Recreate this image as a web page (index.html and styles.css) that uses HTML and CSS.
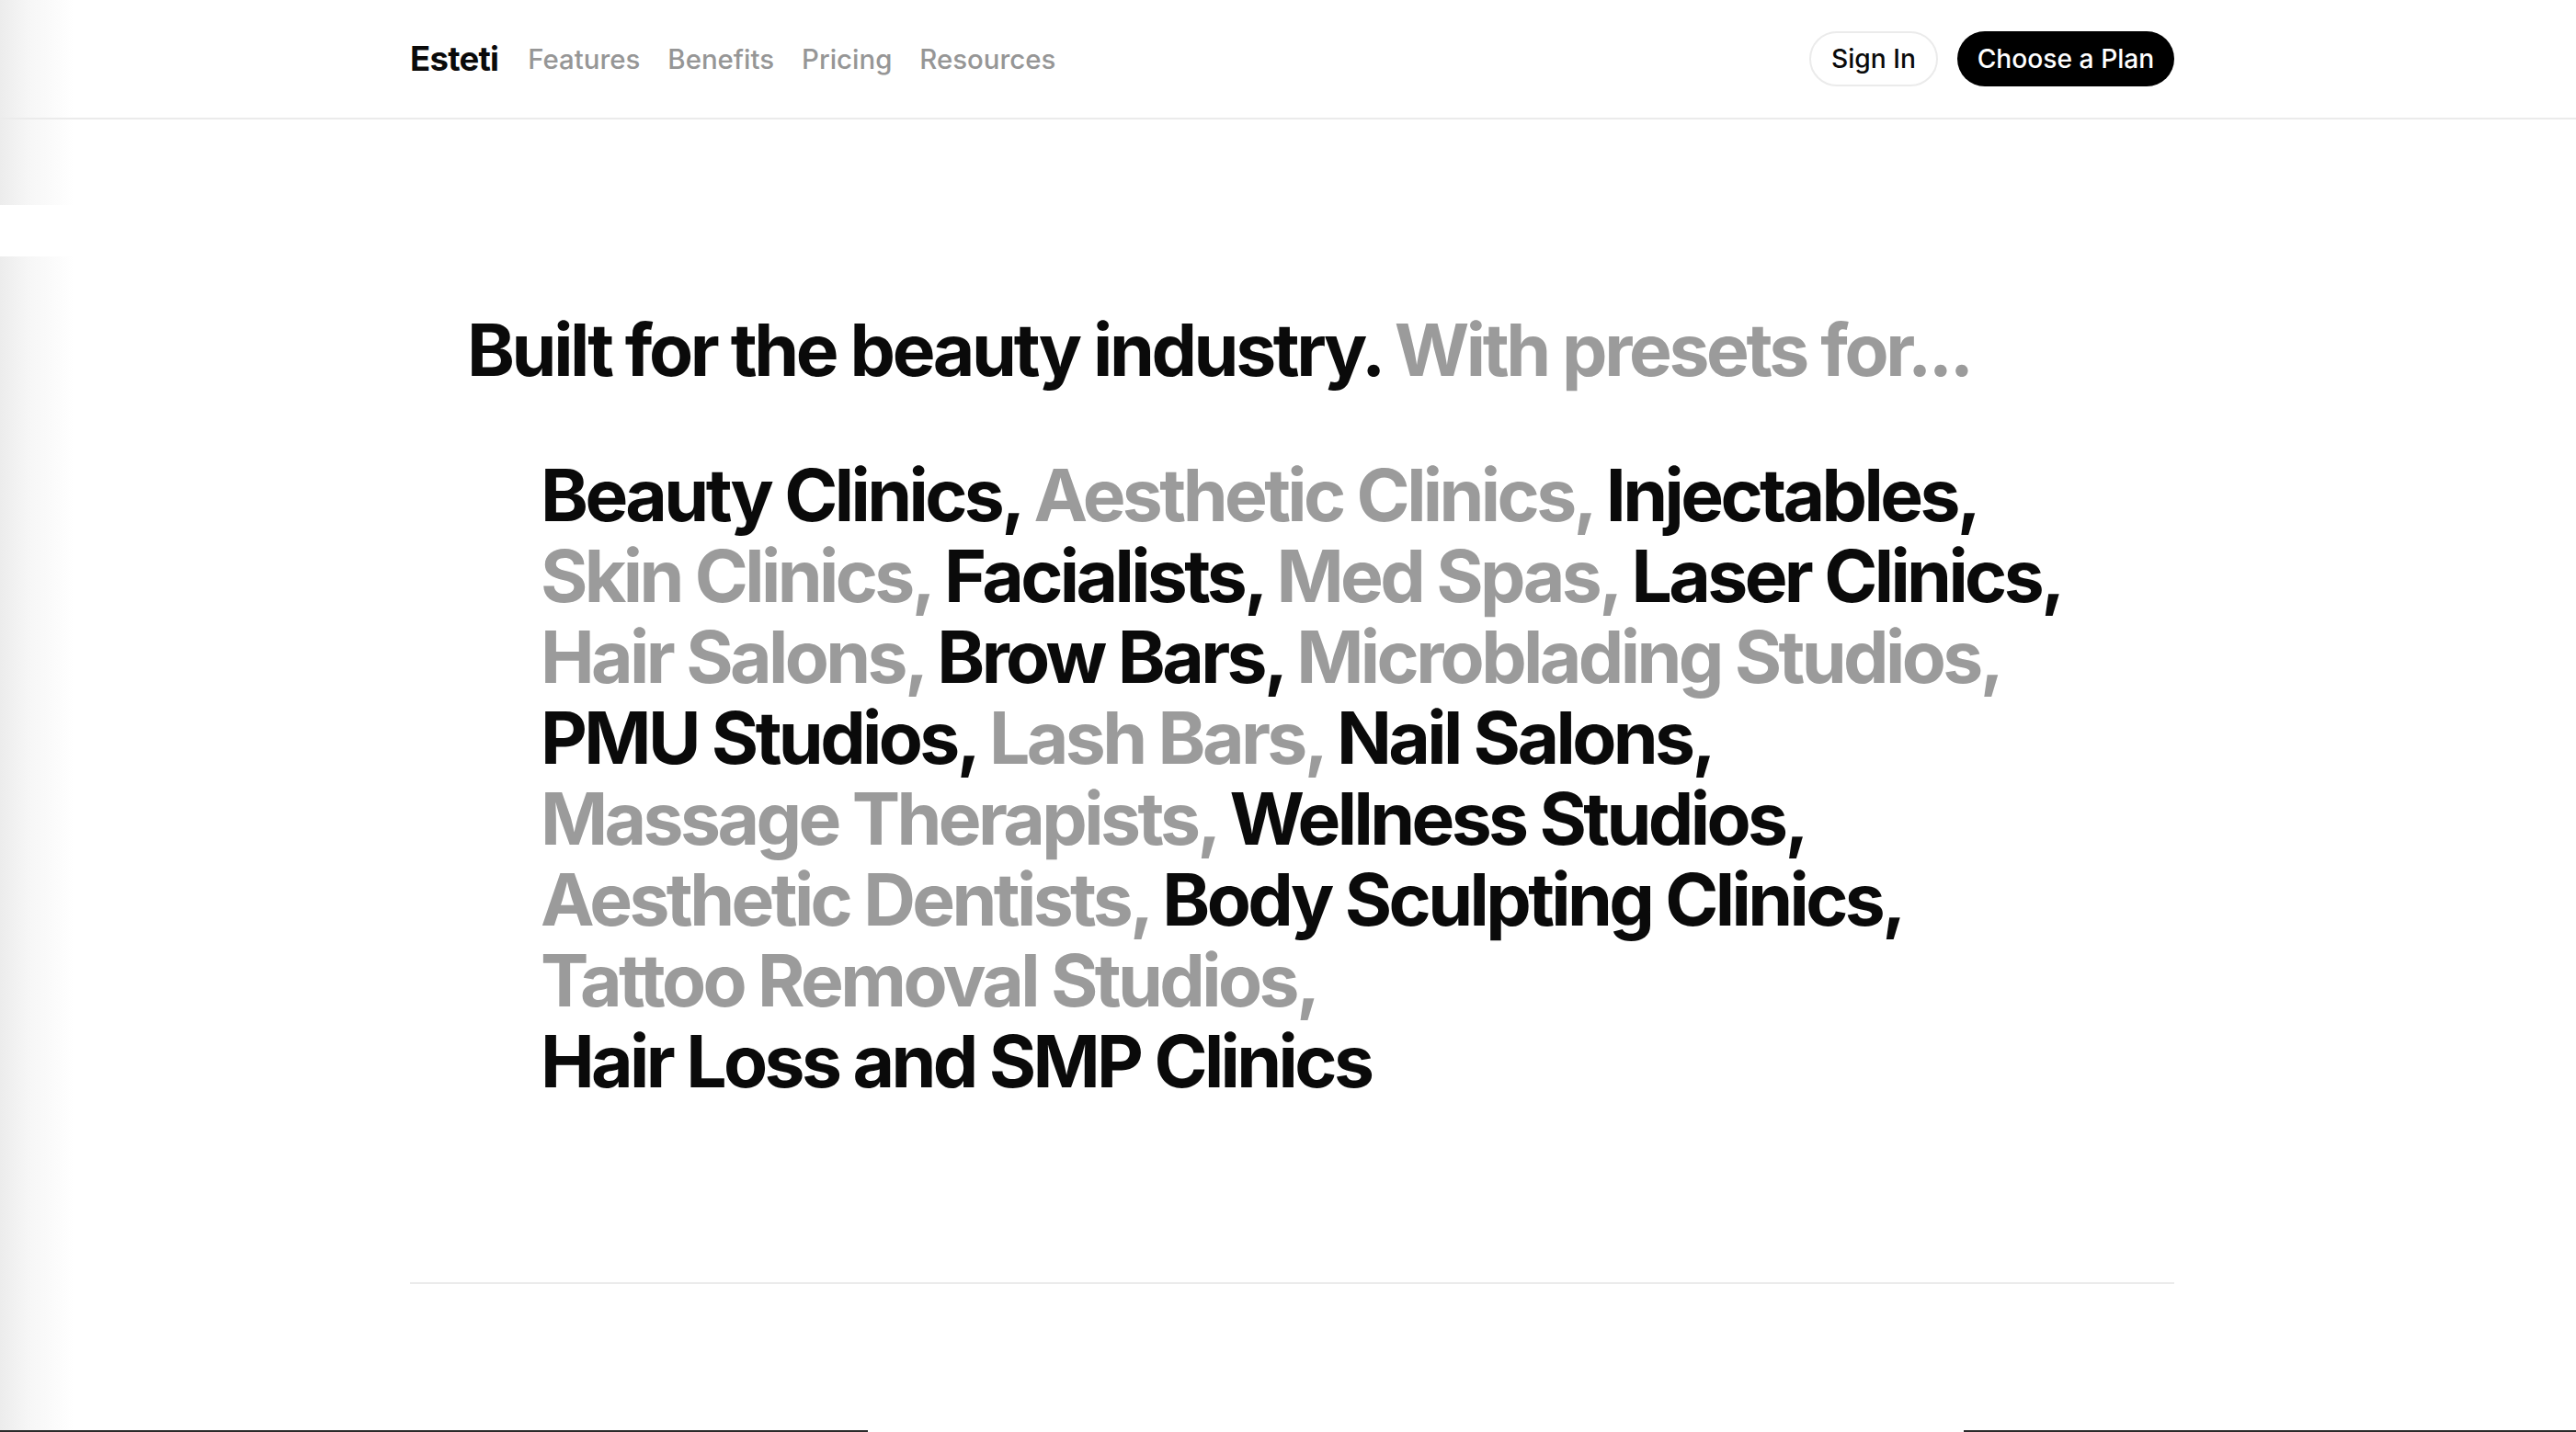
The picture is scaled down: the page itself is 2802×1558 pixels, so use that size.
FILE: index.html
```html
<!DOCTYPE html>
<html lang="en">
<head>
<meta charset="utf-8">
<title>Esteti — Built for the beauty industry</title>
<link rel="stylesheet" href="styles.css">
</head>
<body>
<header class="topbar">
  <div class="container nav">
    <div class="nav-left">
      <a class="brand" href="#">Esteti</a>
      <a class="nav-link" href="#">Features</a>
      <a class="nav-link" href="#">Benefits</a>
      <a class="nav-link" href="#">Pricing</a>
      <a class="nav-link" href="#">Resources</a>
    </div>
    <div class="nav-right">
      <a class="btn btn-outline" href="#">Sign In</a>
      <a class="btn btn-solid" href="#">Choose a Plan</a>
    </div>
  </div>
</header>
<main class="container">
  <section class="industries">
    <h2 class="headline">Built for the beauty industry. <span class="muted">With presets for...</span></h2>
    <p class="list">
      <span class="item">Beauty Clinics,</span>
      <span class="item muted">Aesthetic Clinics,</span>
      <span class="item">Injectables,</span>
      <span class="item muted">Skin Clinics,</span>
      <span class="item">Facialists,</span>
      <span class="item muted">Med Spas,</span>
      <span class="item">Laser Clinics,</span>
      <span class="item muted">Hair Salons,</span>
      <span class="item">Brow Bars,</span>
      <span class="item muted">Microblading Studios,</span>
      <span class="item">PMU Studios,</span>
      <span class="item muted">Lash Bars,</span>
      <span class="item">Nail Salons,</span>
      <span class="item muted">Massage Therapists,</span>
      <span class="item">Wellness Studios,</span>
      <span class="item muted">Aesthetic Dentists,</span>
      <span class="item">Body Sculpting Clinics,</span>
      <span class="item muted">Tattoo Removal Studios,</span>
      <span class="item">Hair Loss and SMP Clinics</span>
    </p>
  </section>
  <hr class="divider">
</main>
</body>
</html>
```
FILE: styles.css
```css
html, body {
  margin: 0;
  padding: 0;
  height: 100%;
}

body {
  font-family: Inter, "Noto Sans", "Liberation Sans", sans-serif;
  color: #0a0a0a;
  overflow: hidden;
  background:
    linear-gradient(#2b2b2b, #2b2b2b) left bottom / 944px 2px no-repeat,
    linear-gradient(#2b2b2b, #2b2b2b) right bottom / 666px 2px no-repeat,
    linear-gradient(#ffffff, #ffffff) 0 223px / 90px 56px no-repeat,
    linear-gradient(to right, #ececec 0, #f6f6f6 30px, #ffffff 80px) #ffffff;
}

a {
  text-decoration: none;
  color: inherit;
}

.container {
  width: 1919px;
  margin-left: calc(50% - 955px);
}

.topbar {
  height: 128px;
  border-bottom: 2px solid #ebebeb;
}

.nav {
  height: 100%;
  display: flex;
  align-items: center;
  justify-content: space-between;
}

.nav-left {
  display: flex;
  align-items: center;
  gap: 30px;
}

.brand {
  font-size: 36.5px;
  font-weight: 700;
  letter-spacing: -0.02em;
  color: #0a0a0a;
  margin-right: 2px;
}

.nav-link {
  font-size: 29.4px;
  font-weight: 500;
  color: #969696;
}

.nav-right {
  display: flex;
  align-items: center;
  gap: 21px;
}

.btn {
  height: 60px;
  box-sizing: border-box;
  display: inline-flex;
  align-items: center;
  justify-content: center;
  border-radius: 999px;
  font-size: 28.2px;
  font-weight: 550;
  white-space: nowrap;
  padding: 0 20px;
}

.btn-outline {
  border: 2px solid #ebebeb;
  color: #0a0a0a;
  width: 140px;
}

.btn-solid {
  background: #000000;
  color: #ffffff;
  width: 236px;
}

.industries {
  padding: 207px 62px 0 62px;
}

.headline {
  margin: 0;
  font-size: 78.6px;
  line-height: 88px;
  font-weight: 700;
  letter-spacing: -0.043em;
  color: #0a0a0a;
}

.muted {
  color: #9b9b9b;
}

.list {
  margin: 70px 0 0 80px;
  font-size: 78.6px;
  line-height: 88px;
  font-weight: 700;
  letter-spacing: -0.046em;
  color: #0a0a0a;
}

.item {
  white-space: nowrap;
}

.divider {
  margin: 196px 0 0 0;
  border: 0;
  height: 2px;
  background: #ebebeb;
}
```
